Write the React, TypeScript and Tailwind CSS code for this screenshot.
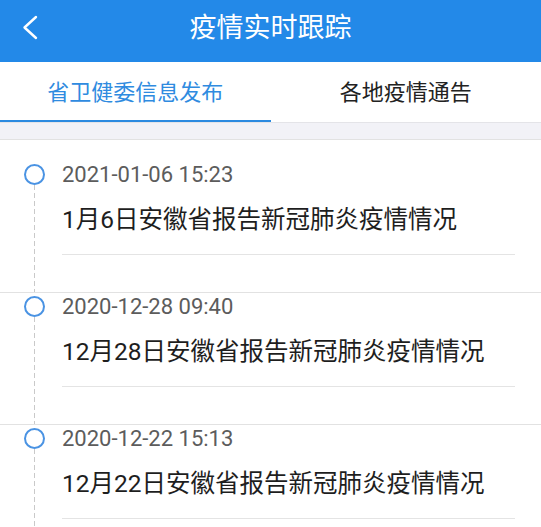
const items = [
  { time: "2021-01-06 15:23", title: "1月6日安徽省报告新冠肺炎疫情情况" },
  { time: "2020-12-28 09:40", title: "12月28日安徽省报告新冠肺炎疫情情况" },
  { time: "2020-12-22 15:13", title: "12月22日安徽省报告新冠肺炎疫情情况" },
];

export default function App() {
  return (
    <div className="w-[541px] h-[527px] overflow-hidden bg-white font-['Roboto','Noto_Sans_CJK_SC',sans-serif]">
      {/* Header */}
      <div className="h-[62px] bg-[#2389e8] flex items-center text-white">
        <div className="w-[62px] h-full">
          <svg width="62" height="62" viewBox="0 0 62 62" fill="none">
            <polyline points="36,17 24.5,27.5 36,38" stroke="white" strokeWidth="2.4" strokeLinecap="round" strokeLinejoin="round" />
          </svg>
        </div>
        <div className="flex-1 text-center text-[27px] leading-[36px] pb-[6px] pr-[62px]">疫情实时跟踪</div>
      </div>

      {/* Tabs */}
      <div className="flex h-[61px] border-b border-[#e4e4e8]">
        <div className="flex-1 flex items-center justify-center text-[22px] text-[#2f8be0] shadow-[inset_0_-2px_0_#2b8ae0]">
          省卫健委信息发布
        </div>
        <div className="flex-1 flex items-center justify-center text-[22px] text-[#222]">各地疫情通告</div>
      </div>
      <div className="h-[16px] bg-[#f2f2f7]" />

      {/* Timeline */}
      <div className="bg-white">
        {items.map((item, i) => (
          <div key={i} className={`flex border-t border-[#e2e2e2] ${i === 0 ? "pt-[21px]" : ""}`}>
            <div className="w-[62px] flex flex-col pl-[24px] pt-[3px]">
              <div className="w-[21px] h-[21px] rounded-full border-2 border-[#4a93e3] bg-white" />
              <div className="flex-1 ml-[10px] w-px bg-[linear-gradient(to_bottom,#c9c9c9_5px,transparent_5px)] bg-[length:1px_8px]" />
            </div>
            <div className="flex-1 pr-[26px] pb-[37px]">
              <div className="pt-px text-[22px] leading-[26px] text-[#5c5c5c]">{item.time}</div>
              <div className="mt-[16px] text-[24.5px] leading-[32px] text-[#1e1e1e] whitespace-nowrap">{item.title}</div>
              <div className="mt-[18px] h-px bg-[#e4e4e4]" />
            </div>
          </div>
        ))}
      </div>
    </div>
  );
}
